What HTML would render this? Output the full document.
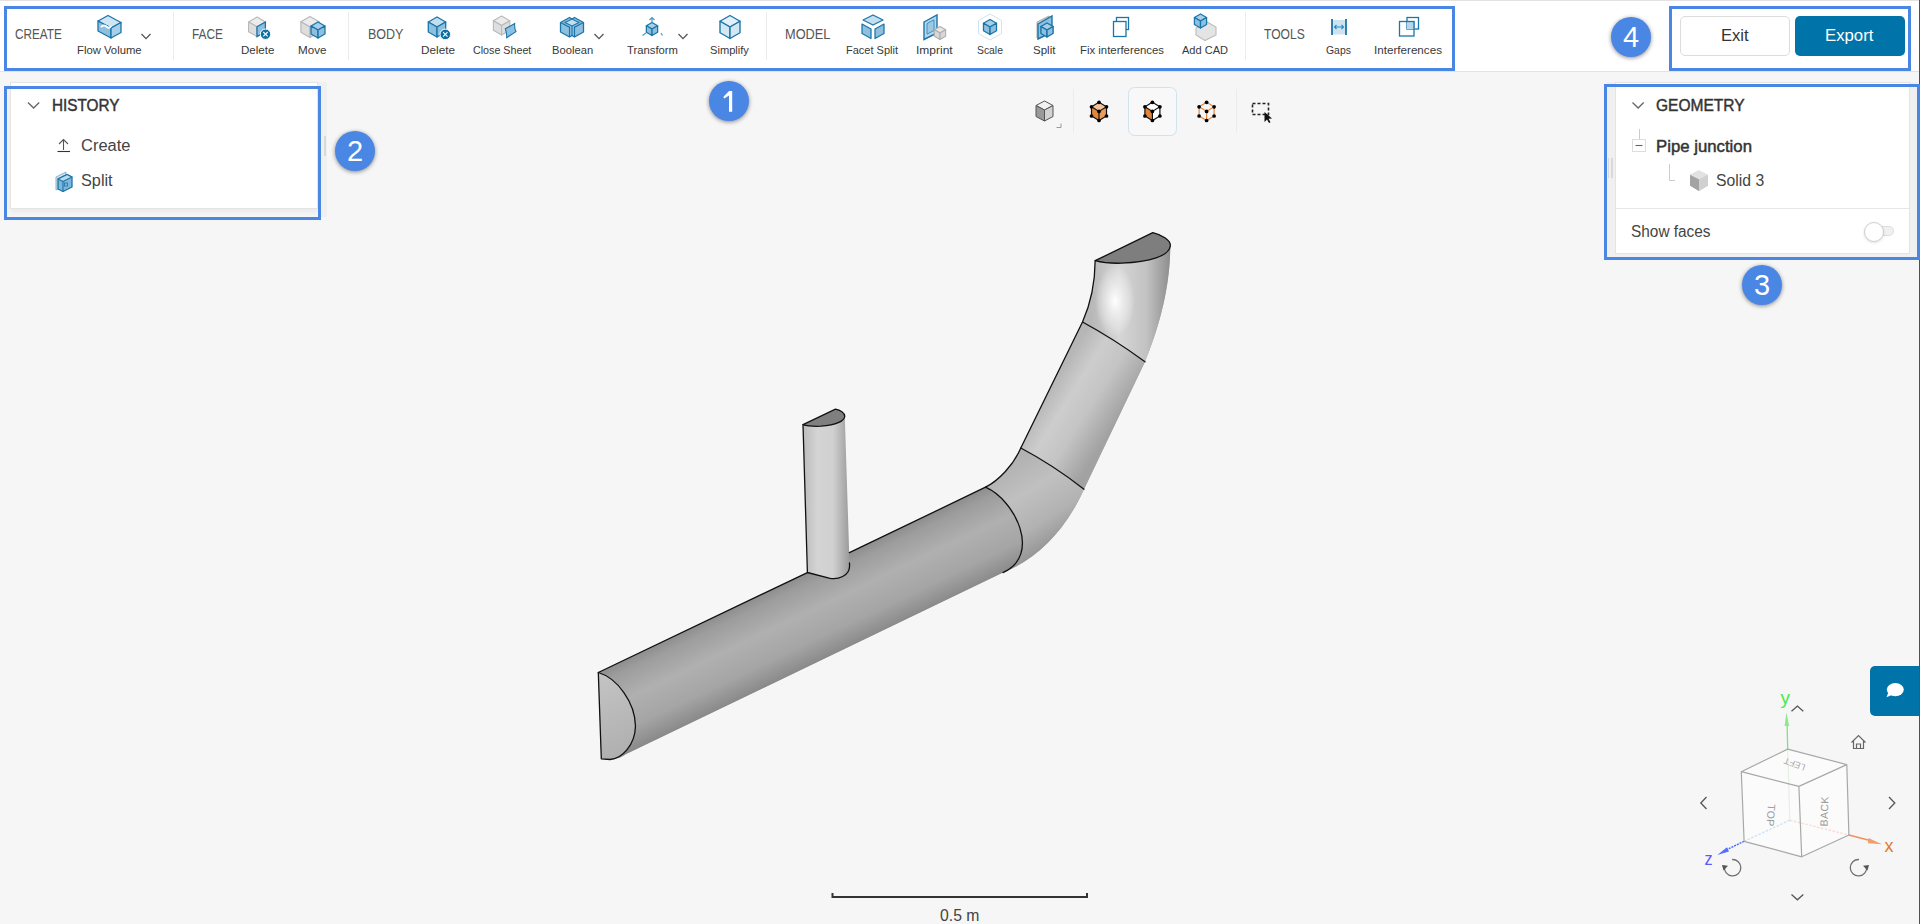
<!DOCTYPE html>
<html><head><meta charset="utf-8"><style>
*{margin:0;padding:0;box-sizing:border-box}
html,body{width:1920px;height:924px;overflow:hidden;background:#f6f6f6;font-family:"Liberation Sans",sans-serif}
.abs{position:absolute}
.t{position:absolute;line-height:1;white-space:nowrap;transform-origin:0 0}
.hl{position:absolute;border:3px solid #4a86e4}
.badge{position:absolute;width:40px;height:40px;border-radius:50%;background:#4a86e4;box-shadow:0 1px 4px rgba(0,0,0,.45);}
</style></head><body>
<div class="abs" style="left:0;top:0;width:1920px;height:72px;background:#fff;border-top:1px solid #e2e2e2;border-bottom:1px solid #e3e3e3"></div>
<div class="abs" style="left:173px;top:12px;width:1px;height:48px;background:#ececec"></div>
<div class="abs" style="left:348px;top:12px;width:1px;height:48px;background:#ececec"></div>
<div class="abs" style="left:766px;top:12px;width:1px;height:48px;background:#ececec"></div>
<div class="abs" style="left:1245px;top:12px;width:1px;height:48px;background:#ececec"></div>
<svg class="abs" width="1920" height="72" style="left:0;top:0"><polygon points="98,21 108,15.5 121,22.5 111,28" fill="#cfe5f3" stroke="#1a75a8" stroke-width="1.3" stroke-linejoin="round"/><polygon points="98,21 111,28 111,38 98,31" fill="#8dbfdf" stroke="#1a75a8" stroke-width="1.3" stroke-linejoin="round"/><polygon points="111,28 121,22.5 121,32.5 111,38" fill="#a7cfe9" stroke="#1a75a8" stroke-width="1.3" stroke-linejoin="round"/><path d="M101,27 q3,-3 6,0 q2,2 4,-1" stroke="#fff" stroke-width="2" fill="none"/><polygon points="257.00,17.10 265.44,21.95 257.00,26.80 248.56,21.95" fill="#ececec" stroke="#b9b9b9" stroke-width="1.1" stroke-linejoin="round"/><polygon points="248.56,21.95 257.00,26.80 257.00,36.50 248.56,31.65" fill="#dedede" stroke="#b9b9b9" stroke-width="1.1" stroke-linejoin="round"/><polygon points="265.44,21.95 257.00,26.80 257.00,36.50 265.44,31.65" fill="#dedede" stroke="#b9b9b9" stroke-width="1.1" stroke-linejoin="round"/><polygon points="257,26.8 265.4,22 265.4,31.6 257,36.5" fill="#8dbfdf" stroke="#1a75a8" stroke-width="1.3"/><circle cx="265.5" cy="34.2" r="5.2" fill="#0f6fa3" stroke="#fff" stroke-width="1"/><path d="M263.3,32.0L267.7,36.400000000000006M267.7,32.0L263.3,36.400000000000006" stroke="#fff" stroke-width="1.1"/><polygon points="310.00,16.50 319.13,21.75 310.00,27.00 300.87,21.75" fill="#ececec" stroke="#b9b9b9" stroke-width="1.2" stroke-linejoin="round"/><polygon points="300.87,21.75 310.00,27.00 310.00,37.50 300.87,32.25" fill="#dedede" stroke="#b9b9b9" stroke-width="1.2" stroke-linejoin="round"/><polygon points="319.13,21.75 310.00,27.00 310.00,37.50 319.13,32.25" fill="#dedede" stroke="#b9b9b9" stroke-width="1.2" stroke-linejoin="round"/><polygon points="318.00,22.00 324.96,26.00 318.00,30.00 311.04,26.00" fill="#a7cfe9" stroke="#1a75a8" stroke-width="1.3" stroke-linejoin="round"/><polygon points="311.04,26.00 318.00,30.00 318.00,38.00 311.04,34.00" fill="#8dbfdf" stroke="#1a75a8" stroke-width="1.3" stroke-linejoin="round"/><polygon points="324.96,26.00 318.00,30.00 318.00,38.00 324.96,34.00" fill="#8dbfdf" stroke="#1a75a8" stroke-width="1.3" stroke-linejoin="round"/><polygon points="437.00,17.00 445.70,22.00 437.00,27.00 428.30,22.00" fill="#c4def0" stroke="#1a75a8" stroke-width="1.3" stroke-linejoin="round"/><polygon points="428.30,22.00 437.00,27.00 437.00,37.00 428.30,32.00" fill="#8dbfdf" stroke="#1a75a8" stroke-width="1.3" stroke-linejoin="round"/><polygon points="445.70,22.00 437.00,27.00 437.00,37.00 445.70,32.00" fill="#8dbfdf" stroke="#1a75a8" stroke-width="1.3" stroke-linejoin="round"/><circle cx="445.3" cy="34.4" r="5.3" fill="#0f6fa3" stroke="#fff" stroke-width="1"/><path d="M443.1,32.199999999999996L447.5,36.6M447.5,32.199999999999996L443.1,36.6" stroke="#fff" stroke-width="1.1"/><polygon points="501.60,16.10 509.87,20.85 501.60,25.60 493.34,20.85" fill="#ececec" stroke="#b9b9b9" stroke-width="1.1" stroke-linejoin="round"/><polygon points="493.34,20.85 501.60,25.60 501.60,35.10 493.34,30.35" fill="#dedede" stroke="#b9b9b9" stroke-width="1.1" stroke-linejoin="round"/><polygon points="509.87,20.85 501.60,25.60 501.60,35.10 509.87,30.35" fill="#dedede" stroke="#b9b9b9" stroke-width="1.1" stroke-linejoin="round"/><path d="M505.3,28.8 L514.7,23.6 q-0.5,4.5 1.3,8 L506.7,37.6 q0.2,-4.5 -1.4,-8.8z" fill="#8dbfdf" stroke="#1a75a8" stroke-width="1.1"/><polygon points="560.5,22.5 569.5,17.5 572,19 574.5,17.5 583.5,22.5 583.5,32 574.5,37 572,35.5 569.5,37 560.5,32" fill="#8dbfdf" stroke="#1a75a8" stroke-width="1.3" stroke-linejoin="round"/><polygon points="565,22.5 572,19 579,22.5 572,26" fill="#c4def0" stroke="#1a75a8" stroke-width="1.1"/><path d="M560.5,22.5 L569.5,27.2 V37 M583.5,22.5 L574.5,27.2 V37 M572,26 V35.5" fill="none" stroke="#1a75a8" stroke-width="1.1"/><polygon points="652.00,22.50 657.65,25.75 652.00,29.00 646.35,25.75" fill="#a7cfe9" stroke="#1a75a8" stroke-width="1.25" stroke-linejoin="round"/><polygon points="646.35,25.75 652.00,29.00 652.00,35.50 646.35,32.25" fill="#8dbfdf" stroke="#1a75a8" stroke-width="1.25" stroke-linejoin="round"/><polygon points="657.65,25.75 652.00,29.00 652.00,35.50 657.65,32.25" fill="#8dbfdf" stroke="#1a75a8" stroke-width="1.25" stroke-linejoin="round"/><path d="M652,22 V17.5 M649.5,20 L652,17.5 L654.5,20 M646,33 L642.5,35.5 M661,33 L662.5,35.5" stroke="#4a9acc" stroke-width="1.2" fill="none"/><polygon points="730.00,15.50 740.00,21.25 730.00,27.00 720.00,21.25" fill="#e3f0f8" stroke="#1a75a8" stroke-width="1.35" stroke-linejoin="round"/><polygon points="720.00,21.25 730.00,27.00 730.00,38.50 720.00,32.75" fill="#d3e7f3" stroke="#1a75a8" stroke-width="1.35" stroke-linejoin="round"/><polygon points="740.00,21.25 730.00,27.00 730.00,38.50 740.00,32.75" fill="#d3e7f3" stroke="#1a75a8" stroke-width="1.35" stroke-linejoin="round"/><polygon points="873,15 883,20 873,25 863,20" fill="#c4def0" stroke="#1a75a8" stroke-width="1.25" stroke-linejoin="round"/><polygon points="862,24 871,29 871,38.5 862,33.5" fill="#8dbfdf" stroke="#1a75a8" stroke-width="1.25" stroke-linejoin="round"/><polygon points="884,24 875,29 875,38.5 884,33.5" fill="#8dbfdf" stroke="#1a75a8" stroke-width="1.25" stroke-linejoin="round"/><polygon points="924,22 937,15 937,33 924,39.5" fill="#b5d6ec" stroke="#1a75a8" stroke-width="1.4"/><polygon points="927,23.5 934,19.8 934,30.5 927,34.2" fill="#9cc8e6" stroke="#2a80b5" stroke-width="0.8"/><polygon points="940.00,26.50 945.65,29.75 940.00,33.00 934.35,29.75" fill="#e6e6e6" stroke="#b0b0b0" stroke-width="1.1" stroke-linejoin="round"/><polygon points="934.35,29.75 940.00,33.00 940.00,39.50 934.35,36.25" fill="#d8d8d8" stroke="#b0b0b0" stroke-width="1.1" stroke-linejoin="round"/><polygon points="945.65,29.75 940.00,33.00 940.00,39.50 945.65,36.25" fill="#d8d8d8" stroke="#b0b0b0" stroke-width="1.1" stroke-linejoin="round"/><polygon points="990,14 1001.5,20.5 1001.5,33.5 990,40 978.5,33.5 978.5,20.5" fill="none" stroke="#c9e0ee" stroke-width="0.9"/><polygon points="990.00,19.50 996.52,23.25 990.00,27.00 983.48,23.25" fill="#a7cfe9" stroke="#1a75a8" stroke-width="1.3" stroke-linejoin="round"/><polygon points="983.48,23.25 990.00,27.00 990.00,34.50 983.48,30.75" fill="#8dbfdf" stroke="#1a75a8" stroke-width="1.3" stroke-linejoin="round"/><polygon points="996.52,23.25 990.00,27.00 990.00,34.50 996.52,30.75" fill="#8dbfdf" stroke="#1a75a8" stroke-width="1.3" stroke-linejoin="round"/><polygon points="1037,22 1049,16 1049,32 1037,38" fill="#cfcfcf" stroke="#aaa" stroke-width="1"/><polygon points="1038,24 1052,16 1052,32 1038,39" fill="#8dbfdf" stroke="#1a75a8" stroke-width="1.4"/><polygon points="1047.00,23.00 1053.09,26.50 1047.00,30.00 1040.91,26.50" fill="#a7cfe9" stroke="#1a75a8" stroke-width="1.4" stroke-linejoin="round"/><polygon points="1040.91,26.50 1047.00,30.00 1047.00,37.00 1040.91,33.50" fill="#8dbfdf" stroke="#1a75a8" stroke-width="1.4" stroke-linejoin="round"/><polygon points="1053.09,26.50 1047.00,30.00 1047.00,37.00 1053.09,33.50" fill="#8dbfdf" stroke="#1a75a8" stroke-width="1.4" stroke-linejoin="round"/><rect x="1116.5" y="17.5" width="12" height="12" fill="#fff" stroke="#1a75a8" stroke-width="1.3"/><rect x="1113.5" y="21.5" width="12.5" height="15" fill="#fff" stroke="#1a75a8" stroke-width="1.3"/><polygon points="1196,28 1207,22 1216,27 1216,35 1205,40.5 1196,35" fill="#e4e4e4" stroke="#bdbdbd" stroke-width="1.1"/><polygon points="1200.50,14.00 1206.59,17.50 1200.50,21.00 1194.41,17.50" fill="#a7cfe9" stroke="#1a75a8" stroke-width="1.25" stroke-linejoin="round"/><polygon points="1194.41,17.50 1200.50,21.00 1200.50,28.00 1194.41,24.50" fill="#8dbfdf" stroke="#1a75a8" stroke-width="1.25" stroke-linejoin="round"/><polygon points="1206.59,17.50 1200.50,21.00 1200.50,28.00 1206.59,24.50" fill="#8dbfdf" stroke="#1a75a8" stroke-width="1.25" stroke-linejoin="round"/><rect x="1332" y="20" width="14" height="14.5" fill="#cde3f1"/><path d="M1332,19 V35 M1346,19 V35" stroke="#1a75a8" stroke-width="1.8"/><path d="M1334.5,27 H1343.5 M1336.5,25 L1334.5,27 L1336.5,29 M1341.5,25 L1343.5,27 L1341.5,29" stroke="#2b88bf" stroke-width="1.1" fill="none"/><rect x="1407" y="17.5" width="11.5" height="11.5" fill="#fff" stroke="#1a75a8" stroke-width="1.3"/><rect x="1407" y="21" width="8" height="8" fill="#b8d7ec"/><rect x="1399.5" y="21.5" width="14.5" height="14.5" fill="none" stroke="#1a75a8" stroke-width="1.3"/><path d="M141.5,34 L146.0,38.6 L150.5,34" fill="none" stroke="#555" stroke-width="1.3"/><path d="M594.5,34 L599.0,38.6 L603.5,34" fill="none" stroke="#555" stroke-width="1.3"/><path d="M678.5,34 L683.0,38.6 L687.5,34" fill="none" stroke="#555" stroke-width="1.3"/></svg>
<div class="t" style="left:14.61px;top:26.70px;font-size:14.53px;transform:scaleX(0.8100);color:#555;">CREATE</div><div class="t" style="left:192.05px;top:26.70px;font-size:14.53px;transform:scaleX(0.8179);color:#555;">FACE</div><div class="t" style="left:367.60px;top:26.70px;font-size:14.53px;transform:scaleX(0.8619);color:#555;">BODY</div><div class="t" style="left:785.48px;top:26.70px;font-size:14.53px;transform:scaleX(0.8807);color:#555;">MODEL</div><div class="t" style="left:1263.76px;top:26.70px;font-size:14.53px;transform:scaleX(0.8327);color:#555;">TOOLS</div><div class="t" style="left:76.90px;top:44.16px;font-size:11.63px;transform:scaleX(0.9706);color:#383838;">Flow Volume</div><div class="t" style="left:241.07px;top:44.16px;font-size:11.63px;transform:scaleX(0.9953);color:#383838;">Delete</div><div class="t" style="left:298.07px;top:44.16px;font-size:11.63px;transform:scaleX(1.0009);color:#383838;">Move</div><div class="t" style="left:420.56px;top:44.16px;font-size:11.63px;transform:scaleX(1.0108);color:#383838;">Delete</div><div class="t" style="left:473.46px;top:44.16px;font-size:11.63px;transform:scaleX(0.9206);color:#383838;">Close Sheet</div><div class="t" style="left:551.60px;top:44.16px;font-size:11.63px;transform:scaleX(0.9637);color:#383838;">Boolean</div><div class="t" style="left:627.27px;top:44.16px;font-size:11.63px;transform:scaleX(0.9696);color:#383838;">Transform</div><div class="t" style="left:710.10px;top:44.16px;font-size:11.63px;transform:scaleX(0.9558);color:#383838;">Simplify</div><div class="t" style="left:846.12px;top:44.16px;font-size:11.63px;transform:scaleX(0.9463);color:#383838;">Facet Split</div><div class="t" style="left:915.92px;top:44.16px;font-size:11.63px;transform:scaleX(1.0314);color:#383838;">Imprint</div><div class="t" style="left:976.53px;top:44.16px;font-size:11.63px;transform:scaleX(0.8921);color:#383838;">Scale</div><div class="t" style="left:1033.23px;top:44.16px;font-size:11.63px;transform:scaleX(0.9916);color:#383838;">Split</div><div class="t" style="left:1080.09px;top:44.16px;font-size:11.63px;transform:scaleX(0.9782);color:#383838;">Fix interferences</div><div class="t" style="left:1182.00px;top:44.16px;font-size:11.63px;transform:scaleX(0.9498);color:#383838;">Add CAD</div><div class="t" style="left:1326.48px;top:44.16px;font-size:11.63px;transform:scaleX(0.8954);color:#383838;">Gaps</div><div class="t" style="left:1374.45px;top:44.16px;font-size:11.63px;transform:scaleX(1.0016);color:#383838;">Interferences</div>
<div class="abs" style="left:1680px;top:16px;width:110px;height:40px;border:1px solid #dcdcdc;border-radius:5px;background:#fff"></div>
<div class="abs" style="left:1795px;top:16px;width:110px;height:40px;border-radius:5px;background:#0074a8"></div>
<div class="t" style="left:1720.67px;top:27.97px;font-size:15.63px;transform:scaleX(1.0611);color:#333;">Exit</div>
<div class="t" style="left:1825.46px;top:27.97px;font-size:15.63px;transform:scaleX(1.0718);color:#fff;">Export</div>
<div class="hl" style="left:4px;top:6px;width:1451px;height:65px"></div>
<div class="hl" style="left:1669px;top:6px;width:242px;height:65px"></div>


<svg class="abs" width="1920" height="924" style="left:0;top:0">
<defs>
<linearGradient id="gMain" gradientUnits="userSpaceOnUse" x1="800" y1="576.2" x2="836.5" y2="652.7">
 <stop offset="0" stop-color="#8e8e8e"/><stop offset="0.12" stop-color="#9d9d9d"/><stop offset="0.42" stop-color="#b0b0b0"/><stop offset="0.75" stop-color="#a5a5a5"/><stop offset="1" stop-color="#8a8a8a"/>
</linearGradient>
<linearGradient id="gBend1" gradientUnits="userSpaceOnUse" x1="1000" y1="470" x2="1050" y2="550">
 <stop offset="0" stop-color="#b2b2b2"/><stop offset="0.35" stop-color="#c0c0c0"/><stop offset="0.7" stop-color="#b2b2b2"/><stop offset="1" stop-color="#929292"/>
</linearGradient>
<linearGradient id="gSec2" gradientUnits="userSpaceOnUse" x1="1051" y1="385" x2="1114" y2="425">
 <stop offset="0" stop-color="#b6b6b6"/><stop offset="0.3" stop-color="#cdcdcd"/><stop offset="0.6" stop-color="#c4c4c4"/><stop offset="1" stop-color="#a2a2a2"/>
</linearGradient>
<linearGradient id="gBend2" gradientUnits="userSpaceOnUse" x1="1092" y1="0" x2="1170" y2="0">
 <stop offset="0" stop-color="#b8b8b8"/><stop offset="0.35" stop-color="#d6d6d6"/><stop offset="0.7" stop-color="#c2c2c2"/><stop offset="1" stop-color="#8e8e8e"/>
</linearGradient>
<radialGradient id="gHi" gradientUnits="userSpaceOnUse" cx="1115" cy="301" r="36" gradientTransform="translate(1115,301) scale(0.55,1) translate(-1115,-301)">
 <stop offset="0" stop-color="#ffffff" stop-opacity="1"/><stop offset="0.5" stop-color="#f4f4f4" stop-opacity="0.6"/><stop offset="1" stop-color="#ffffff" stop-opacity="0"/>
</radialGradient>
<linearGradient id="gBranch" gradientUnits="userSpaceOnUse" x1="804" y1="0" x2="849" y2="0">
 <stop offset="0" stop-color="#bdbdbd"/><stop offset="0.3" stop-color="#d4d4d4"/><stop offset="0.65" stop-color="#d0d0d0"/><stop offset="1" stop-color="#9c9c9c"/>
</linearGradient>
<linearGradient id="gCap1" gradientUnits="userSpaceOnUse" x1="600" y1="680" x2="630" y2="750">
 <stop offset="0" stop-color="#c2c2c2"/><stop offset="1" stop-color="#b0b0b0"/>
</linearGradient>
</defs>
<!-- base silhouette -->
<path d="M598.3,672.5 L985.5,487.2 C998,481 1013,466 1020.8,448 L1082.5,322 C1090,305 1095,285 1095.15,260.7 L1152.8,232.7 C1162,235 1171,240 1170.3,246 C1170,290 1158,330 1145,361.8 L1084,489.2 C1065,532 1035,560 1003,572.6 L625.7,754 C622,758 615,759.5 610,759.5 L601.3,758.8 Z" fill="#aaaaaa"/>
<!-- main straight -->
<path d="M598.3,672.5 L985.5,487.2 C1015,500 1042,555 1003,572.6 L618,758 Z" fill="url(#gMain)"/>
<!-- lower bend -->
<path d="M985.5,487.2 C998,481 1013,466 1020.8,448 Q1052.4,464.6 1084,489.2 C1065,532 1035,560 1003,572.6 C1042,555 1015,500 985.5,487.2 Z" fill="url(#gBend1)"/>
<!-- section 2 -->
<path d="M1020.8,448 L1082.5,322 L1145,361.8 L1084,489.2 Q1052.4,464.6 1020.8,448 Z" fill="url(#gSec2)"/>
<!-- upper bend -->
<path d="M1082.5,322 C1090,305 1095,285 1095.15,260.7 C1100,262 1110,263.5 1121.5,263.2 C1150,262 1169,256 1170.3,246 C1170,290 1158,330 1145,361.8 Z" fill="url(#gBend2)"/>
<path d="M1082.5,322 C1090,305 1095,285 1095.15,260.7 C1100,262 1110,263.5 1121.5,263.2 C1150,262 1169,256 1170.3,246 C1170,290 1158,330 1145,361.8 Z" fill="url(#gHi)"/>
<!-- branch -->
<path d="M803,424.7 L807.4,572.5 L829.1,578.1 C838,580 849.6,576 849.6,566 L844.8,416.5 C844,421 836,425 821,426.2 C813,426.5 807,426 803,424.7 Z" fill="url(#gBranch)"/>
<g fill="none" stroke="#111" stroke-width="1.3" stroke-linejoin="round" stroke-linecap="round">
<path d="M598.3,672.5 L807.4,572.6 M849.4,552.7 L985.5,487.2 C998,481 1013,466 1020.8,448 L1082.5,322 C1090,305 1095,285 1095.15,260.7"/>
<path d="M985.5,487.2 C1015,500 1042,555 1003,572.6"/>
<path d="M1020.8,448 Q1052.4,464.6 1084,489.2"/>
<path d="M1082.5,322 Q1114,339 1145,361.8"/>
<path d="M803,424.7 L807.4,572.5 L829.1,578.1 C838,580 849.6,576 849.6,566 L849.5,563"/>
</g>
<!-- caps -->
<path d="M598.3,672.5 C617,678 635,702 635.5,726 C635,745 622,759 610,759.5 L601.3,758.8 Z" fill="url(#gCap1)" stroke="#111" stroke-width="1.3" stroke-linejoin="round"/>
<path d="M1095.15,260.7 L1152.8,232.7 C1162,235 1171,240 1170.3,246 C1169,256 1150,262 1121.5,263.2 C1110,263.5 1100,262 1095.15,260.7 Z" fill="#7e7e7e" stroke="#111" stroke-width="1.3" stroke-linejoin="round"/>
<path d="M803,424.7 L835.5,409.1 C840,410 845,413 844.8,416.5 C844,421 836,425 821,426.2 C813,426.5 807,426 803,424.7 Z" fill="#7f7f7f" stroke="#111" stroke-width="1.3" stroke-linejoin="round"/>
</svg>

<div class="abs" style="left:1919px;top:0;width:1px;height:924px;background:#3d5f3d"></div>
<div class="abs" style="left:10px;top:82px;width:308px;height:127px;background:#fff;border:1px solid #e4e4e4;box-shadow:0 3px 6px rgba(0,0,0,.06)"></div><svg class="abs" width="400" height="240" style="left:0;top:0"><path d="M28,102.5 L33.6,108 L39.2,102.5" fill="none" stroke="#666" stroke-width="1.3"/><path d="M63.5,139.5 V150 M59,144 L63.5,139.5 L68,144" fill="none" stroke="#555" stroke-width="1.1"/><path d="M57.5,151.5 H70" stroke="#333" stroke-width="1.1"/></svg><svg class="abs" width="20" height="22" viewBox="0 0 20 22" style="left:54px;top:170px"><polygon points="2,7 12,2 12,15 2,20" fill="#cfdde6" stroke="#8fb3c8" stroke-width="1"/><polygon points="4,9 13,4.5 18,7 18,17 9,21.5 4,19" fill="#7fb7dc" stroke="#1a75a8" stroke-width="1.3" stroke-linejoin="round"/><polygon points="4,9 13,4.5 18,7 9,11.5" fill="#b9d9ee" stroke="#1a75a8" stroke-width="1.1" stroke-linejoin="round"/><path d="M9,11.5 V21.5" stroke="#1a75a8" stroke-width="1.1"/><rect x="10.5" y="13" width="3" height="3" fill="none" stroke="#1a75a8" stroke-width="0.8"/></svg><div class="t" style="left:52.17px;top:96.92px;font-size:16.28px;transform:scaleX(0.9418);color:#333;-webkit-text-stroke:0.45px #333;">HISTORY</div><div class="t" style="left:80.88px;top:138.13px;font-size:15.98px;transform:scaleX(1.0321);color:#444;">Create</div><div class="t" style="left:80.97px;top:172.30px;font-size:16.19px;transform:scaleX(1.0042);color:#444;">Split</div><div class="abs" style="left:318px;top:82px;width:9px;height:135px;background:#f0f0f0"></div><div class="abs" style="left:324px;top:136px;width:2px;height:20px;background:#d9d9d9"></div><div class="hl" style="left:4px;top:86px;width:317px;height:134px"></div><div class="abs" style="left:1607px;top:82px;width:310px;height:176px;background:#f0f0f0"></div><div class="abs" style="left:1607.5px;top:158px;width:1.6px;height:20px;background:#d9d9d9"></div><div class="abs" style="left:1611px;top:158px;width:1.8px;height:20px;background:#d9d9d9"></div><div class="abs" style="left:1615px;top:82px;width:295px;height:172px;background:#fff;border:1px solid #e4e4e4"></div><div class="abs" style="left:1616px;top:208px;width:293px;height:1px;background:#e6e6e6"></div><svg class="abs" width="320" height="200" style="left:1600px;top:70px"><path d="M32.5,32.5 L38.1,38 L43.7,32.5" fill="none" stroke="#666" stroke-width="1.3"/><path d="M39.5,59 V69" stroke="#ccc" stroke-width="1"/><rect x="32.5" y="69.5" width="13" height="12" fill="#fff" stroke="#ddd" stroke-width="1"/><path d="M35.5,75.5 H42.5" stroke="#666" stroke-width="1.1"/><path d="M69.5,94 V110.5 H75" fill="none" stroke="#ccc" stroke-width="1"/><polygon points="99,100.5 108,105 108,115.5 99,121" fill="#c9c9c9"/><polygon points="99,100.5 90,105 90,115.5 99,121" fill="#a9a9a9"/><polygon points="99,100.5 108,105 99,109.5 90,105" fill="#e2e2e2"/><polygon points="99,109.5 108,105 108,115.5 99,121" fill="#d0d0d0"/><polygon points="99,109.5 90,105 90,115.5 99,121" fill="#a3a3a3"/></svg><div class="t" style="left:1656.22px;top:96.98px;font-size:17.15px;transform:scaleX(0.9064);color:#333;-webkit-text-stroke:0.45px #333;">GEOMETRY</div><div class="t" style="left:1655.66px;top:138.42px;font-size:16.28px;transform:scaleX(1.0304);color:#333;-webkit-text-stroke:0.45px #333;">Pipe junction</div><div class="t" style="left:1715.89px;top:172.17px;font-size:17.16px;transform:scaleX(0.9181);color:#444;">Solid 3</div><div class="t" style="left:1630.71px;top:223.12px;font-size:16.05px;transform:scaleX(0.9599);color:#444;">Show faces</div><div class="abs" style="left:1866px;top:226px;width:28px;height:10px;border-radius:5px;background:#f0f0f0;border:1px solid #dedede"></div><div class="abs" style="left:1864px;top:221.5px;width:20px;height:20px;border-radius:50%;background:#fff;border:1px solid #cfcfcf;box-shadow:0 1px 3px rgba(0,0,0,.12)"></div><div class="hl" style="left:1604px;top:84px;width:316px;height:176px"></div><div class="badge" style="left:709px;top:81px"></div><svg class="abs" width="40" height="40" style="left:709px;top:81px"><path d="M20,10 H23.2 V30.8 H20 V14.6 L15.3,17.6 L14.3,16 Z" fill="#fff"/></svg><div class="badge" style="left:335px;top:131px"></div><div class="t" style="left:335px;top:136.5px;width:40px;text-align:center;font-size:29px;color:#fff">2</div><div class="badge" style="left:1742px;top:265px"></div><div class="t" style="left:1742px;top:270.5px;width:40px;text-align:center;font-size:29px;color:#fff">3</div><div class="badge" style="left:1611px;top:17px"></div><div class="t" style="left:1611px;top:22.5px;width:40px;text-align:center;font-size:29px;color:#fff">4</div><svg class="abs" width="300" height="60" style="left:1000px;top:80px"><rect x="128.5" y="7.5" width="48" height="48" rx="6" fill="#f8f8f8" stroke="#cfe2ee" stroke-width="1"/><path d="M73.5,9 V53 M236.5,9 V53" stroke="#ececec" stroke-width="1"/><polygon points="44.5,21 53,25.5 44.5,30 36,25.5" fill="#f2f2f2" stroke="#555" stroke-width="1"/><polygon points="36,25.5 44.5,30 44.5,41 36,36.5" fill="#9a9a9a" stroke="#555" stroke-width="1"/><polygon points="53,25.5 44.5,30 44.5,41 53,36.5" fill="#d2d2d2" stroke="#555" stroke-width="1"/><path d="M61,123.5 V127.5 H56.5" transform="translate(0,-80)" fill="none" stroke="#999" stroke-width="1"/><polygon points="99.0,22.3 106.5,26.8 99.0,31.4 91.5,26.8" fill="#f5c39a"/><polygon points="91.5,26.8 99.0,31.4 99.0,40.5 91.5,36.0" fill="#e0853a"/><polygon points="106.5,26.8 99.0,31.4 99.0,40.5 106.5,36.0" fill="#ea9b5a"/><path d="M99.0,22.3 106.5,26.8 106.5,36.0 99.0,40.5 91.5,36.0 91.5,26.8Z M91.5,26.8 99.0,31.4 106.5,26.8 M99.0,31.4 99.0,40.5" fill="none" stroke="#111" stroke-width="1.2"/><circle cx="99.0" cy="22.3" r="1.85" fill="#000"/><circle cx="91.5" cy="26.8" r="1.85" fill="#000"/><circle cx="106.5" cy="26.8" r="1.85" fill="#000"/><circle cx="99.0" cy="31.4" r="1.85" fill="#000"/><circle cx="91.5" cy="36.0" r="1.85" fill="#000"/><circle cx="106.5" cy="36.0" r="1.85" fill="#000"/><circle cx="99.0" cy="40.5" r="1.85" fill="#000"/><polygon points="152.4,22.3 159.9,26.8 152.4,31.4 144.9,26.8" fill="#fff"/><polygon points="144.9,26.8 152.4,31.4 152.4,40.5 144.9,36.0" fill="#e0853a"/><polygon points="159.9,26.8 152.4,31.4 152.4,40.5 159.9,36.0" fill="#fff"/><path d="M152.4,22.3 159.9,26.8 159.9,36.0 152.4,40.5 144.9,36.0 144.9,26.8Z M144.9,26.8 152.4,31.4 159.9,26.8 M152.4,31.4 152.4,40.5" fill="none" stroke="#111" stroke-width="1.2"/><circle cx="152.4" cy="22.3" r="1.85" fill="#000"/><circle cx="144.9" cy="26.8" r="1.85" fill="#000"/><circle cx="159.9" cy="26.8" r="1.85" fill="#000"/><circle cx="152.4" cy="31.4" r="1.85" fill="#000"/><circle cx="144.9" cy="36.0" r="1.85" fill="#000"/><circle cx="159.9" cy="36.0" r="1.85" fill="#000"/><circle cx="152.4" cy="40.5" r="1.85" fill="#000"/><polygon points="206.6,22.3 214.1,26.8 206.6,31.4 199.1,26.8" fill="none"/><polygon points="199.1,26.8 206.6,31.4 206.6,40.5 199.1,36.0" fill="none"/><polygon points="214.1,26.8 206.6,31.4 206.6,40.5 214.1,36.0" fill="none"/><path d="M206.6,22.3 214.1,26.8 214.1,36.0 206.6,40.5 199.1,36.0 199.1,26.8Z M199.1,26.8 206.6,31.4 214.1,26.8 M206.6,31.4 206.6,40.5" fill="none" stroke="#e0853a" stroke-width="1.2"/><circle cx="206.6" cy="22.3" r="1.85" fill="#000"/><circle cx="199.1" cy="26.8" r="1.85" fill="#000"/><circle cx="214.1" cy="26.8" r="1.85" fill="#000"/><circle cx="206.6" cy="31.4" r="1.85" fill="#000"/><circle cx="199.1" cy="36.0" r="1.85" fill="#000"/><circle cx="214.1" cy="36.0" r="1.85" fill="#000"/><circle cx="206.6" cy="40.5" r="1.85" fill="#000"/><rect x="252.5" y="23.5" width="16" height="11" fill="none" stroke="#222" stroke-width="1.6" stroke-dasharray="3,2"/><path d="M264.5,32 L264.5,42 L267,39.5 L269,43 L270.5,42.2 L268.6,38.8 L272,38.5 Z" fill="#111"/></svg><svg class="abs" width="240" height="264" style="left:1680px;top:660px" font-family="Liberation Sans"><path d="M109.8,160.2 L107.7,89.1" stroke="#a8c8a8" stroke-width="1.1"/><path d="M109.8,160.2 L168.9,175.0" stroke="#f08a70" stroke-width="1.4" stroke-dasharray="2.5,1.5"/><path d="M109.8,160.2 L64.1,181.3" stroke="#5aa0f0" stroke-width="1.4" stroke-dasharray="2.5,1.5"/><polygon points="61.3,111.7 107.7,89.1 166.8,104.6 168.9,175.0 121.7,196.8 64.1,181.3" fill="rgba(252,252,252,.72)"/><path d="M107.7,89.1 L107.1,64.0" stroke="#7ee27e" stroke-width="1.3"/><polygon points="106.4,52.5 104.6,66.0 109.2,66.0" fill="#8ee88e"/><path d="M168.9,175.0 L190.0,180.5" stroke="#f0905a" stroke-width="1.4"/><polygon points="202.0,184.2 188.5,178.0 187.8,183.2" fill="#f0a070"/><path d="M64.1,181.3 L46.0,190.0" stroke="#4466ff" stroke-width="1.4" stroke-dasharray="2,1"/><polygon points="37.3,195.1 47.0,187.2 49.0,191.6" fill="#5a6cff"/><path d="M61.3,111.7 L107.7,89.1 L166.8,104.6 L118.9,126.4 Z M61.3,111.7 L64.1,181.3 L121.7,196.8 L168.9,175.0 L166.8,104.6 M118.9,126.4 L121.7,196.8" fill="none" stroke="#a8a8a8" stroke-width="1.2" stroke-linejoin="round"/><text x="100.5" y="43.5" font-size="19" fill="#4ce84c">y</text><text x="204.5" y="192.39999999999998" font-size="18" fill="#e07a30">x</text><text x="24.5" y="204.70000000000005" font-size="19" fill="#5a5aff" transform="translate(24.5,204.70000000000005) scale(0.85,1) translate(-24.5,-204.70000000000005)">z</text><text transform="translate(88.0,144.0) rotate(94)" font-size="10.5" fill="#9a9a9a" letter-spacing="0.3">TOP</text><text transform="translate(147.5,166.5) rotate(-88)" font-size="10.5" fill="#9a9a9a" letter-spacing="0.4">BACK</text><text transform="translate(126.0,105.0) rotate(20) scale(-1,-1)" font-size="9" fill="#a8a8a8">LEFT</text><path d="M111.5,51.3 L117.4,46.0 L123.3,51.3" fill="none" stroke="#555" stroke-width="1.3"/><path d="M111.5,234.6 L117.4,239.8 L123.3,234.6" fill="none" stroke="#555" stroke-width="1.3"/><path d="M26.5,137.0 L20.8,143.0 L26.5,149.0" fill="none" stroke="#555" stroke-width="1.3"/><path d="M209.0,137.0 L214.8,143.0 L209.0,149.0" fill="none" stroke="#555" stroke-width="1.3"/><path d="M171.5,82.5 L178.5,75.5 L185.5,82.5 M173.5,81.0 V88.5 H183.5 V81 M176.5,88.5 V84 H180.5 V88.5" fill="none" stroke="#666" stroke-width="1.2"/><path d="M52.1,199.5 A8.2,8.2 0 1,1 44.5,206.5" fill="none" stroke="#707070" stroke-width="1.3"/><polygon points="42.0,205.0 48.0,205.8 43.5,210.5" fill="#555"/><path d="M179.0,199.5 A8.2,8.2 0 1,0 186.6,206.5" fill="none" stroke="#707070" stroke-width="1.3"/><polygon points="189.0,205.0 183.0,205.8 187.5,210.5" fill="#555"/></svg><div class="abs" style="left:1870px;top:666px;width:49px;height:50px;background:#0074a8;border-radius:5px 0 0 5px"></div><svg class="abs" width="24" height="20" style="left:1884px;top:680px"><ellipse cx="11.3" cy="9.6" rx="8.5" ry="6.6" fill="#fff"/><path d="M4.5,12 L2.5,17.2 L9,14.5Z" fill="#fff"/></svg><svg class="abs" width="270" height="20" style="left:825px;top:885px"><path d="M7.5,8 V12 H262 V8" fill="none" stroke="#333" stroke-width="2"/></svg><div class="t" style="left:940.17px;top:907.14px;font-size:16.13px;transform:scaleX(0.9788);color:#444;">0.5 m</div>
</body></html>
